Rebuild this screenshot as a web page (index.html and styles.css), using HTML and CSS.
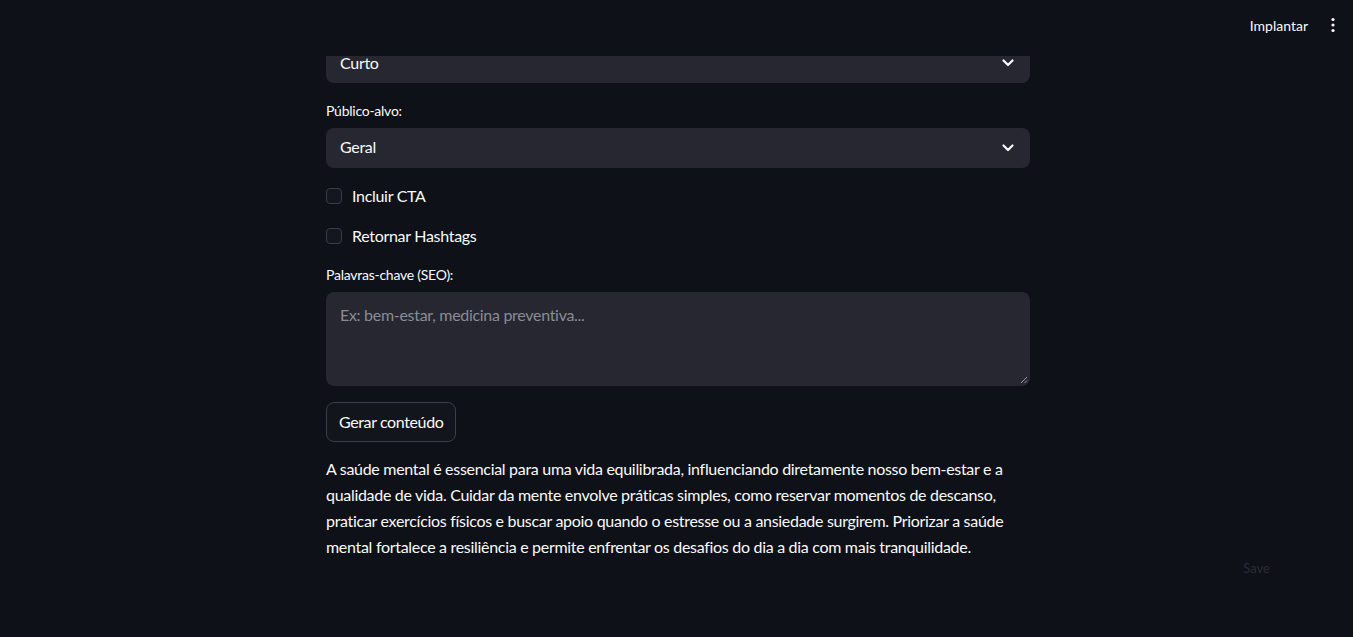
FILE: index.html
```html
<!DOCTYPE html>
<html lang="pt">
<head>
<meta charset="utf-8">
<title>Gerador de conteúdo</title>
<link rel="stylesheet" href="styles.css">
</head>
<body>
<header class="topbar">
  <span class="deploy">Implantar</span>
  <span class="kebab" aria-label="menu">
    <svg width="16" height="16" viewBox="0 0 16 16"><circle cx="8" cy="2.5" r="1.6" fill="#fafafa"/><circle cx="8" cy="8" r="1.6" fill="#fafafa"/><circle cx="8" cy="13.5" r="1.6" fill="#fafafa"/></svg>
  </span>
</header>
<main class="main">
  <div class="block">
    <div class="select">
      <span>Curto</span>
      <svg class="chev" width="12" height="8" viewBox="0 0 12 8"><path d="M1.5 1.5 L6 6 L10.5 1.5" fill="none" stroke="#fafafa" stroke-width="2.2" stroke-linecap="round" stroke-linejoin="round"/></svg>
    </div>
    <label class="label">Público-alvo:</label>
    <div class="select">
      <span>Geral</span>
      <svg class="chev" width="12" height="8" viewBox="0 0 12 8"><path d="M1.5 1.5 L6 6 L10.5 1.5" fill="none" stroke="#fafafa" stroke-width="2.2" stroke-linecap="round" stroke-linejoin="round"/></svg>
    </div>
    <div class="check"><span class="box"></span><span>Incluir CTA</span></div>
    <div class="check"><span class="box"></span><span>Retornar Hashtags</span></div>
    <label class="label seo">Palavras-chave (SEO):</label>
    <div class="textarea">
      <span class="placeholder">Ex: bem-estar, medicina preventiva...</span>
      <svg class="grip" width="8" height="8" viewBox="0 0 8 8"><path d="M7 1 L1 7 M7 4.5 L4.5 7" stroke="#9a9ca4" stroke-width="1"/></svg>
    </div>
    <button class="btn">Gerar conteúdo</button>
    <p class="text">A saúde mental é essencial para uma vida equilibrada, influenciando diretamente nosso bem-estar e a<br>qualidade de vida. Cuidar da mente envolve práticas simples, como reservar momentos de descanso,<br>praticar exercícios físicos e buscar apoio quando o estresse ou a ansiedade surgirem. Priorizar a saúde<br>mental fortalece a resiliência e permite enfrentar os desafios do dia a dia com mais tranquilidade.</p>
  </div>
  <div class="save-row"><span class="save">Save</span></div>
</main>
</body>
</html>
```
FILE: styles.css
```css
html, body {
  margin: 0;
  padding: 0;
  background: #0e1117;
  color: #fafafa;
  font-family: "Lato", "Noto Sans", sans-serif;
  height: 100%;
  overflow: hidden;
}
.topbar {
  position: fixed;
  top: 0;
  left: 0;
  right: 0;
  height: 56px;
  background: #0e1117;
  display: flex;
  align-items: flex-start;
  justify-content: flex-end;
  padding-top: 17px;
  padding-right: 12px;
  box-sizing: border-box;
  gap: 17px;
  z-index: 10;
}
.deploy {
  font-size: 14px;
  line-height: 16px;
  color: #fafafa;
  margin-top: 1px;
}
.kebab {
  display: flex;
  width: 16px;
  height: 16px;
}
.main {
  display: flex;
  flex-direction: column;
  align-items: center;
  padding-top: 43px;
  padding-left: 3px;
  letter-spacing: -0.3px;
}
.block {
  width: 704px;
  display: flex;
  flex-direction: column;
}
.select {
  height: 40px;
  background: #262730;
  border-radius: 8px;
  display: flex;
  align-items: center;
  justify-content: space-between;
  padding: 0 16px 0 14px;
  font-size: 16px;
  line-height: 20px;
}
.select span { margin-top: -2px; }
.select:first-child span { margin-top: 0; }
.chev { display: block; }
.label {
  font-size: 14px;
  line-height: 18px;
  margin-top: 19px;
  margin-bottom: 8px;
  letter-spacing: -0.25px;
}
.check {
  display: flex;
  align-items: center;
  gap: 10px;
  font-size: 16px;
  height: 24px;
  margin-top: 16px;
}
.check span:last-child { margin-top: -2px; }
.box {
  width: 14px;
  height: 14px;
  border: 1px solid #3a3c46;
  border-radius: 4px;
  background: #14171f;
}
.label.seo { margin-top: 18px; }
.textarea {
  position: relative;
  height: 94px;
  background: #262730;
  border-radius: 8px;
  padding: 13px 14px;
  box-sizing: border-box;
  font-size: 16px;
}
.placeholder { color: #8a8c94; }
.grip {
  position: absolute;
  right: 2px;
  bottom: 2px;
}
.btn {
  align-self: flex-start;
  margin-top: 16px;
  height: 40px;
  padding: 0 12px 2px;
  background: #12151c;
  color: #fafafa;
  border: 1px solid #3b3e46;
  border-radius: 8px;
  font-family: inherit;
  font-size: 16px;
  letter-spacing: -0.38px;
}
.text {
  margin: 14px 0 0;
  font-size: 16px;
  line-height: 26px;
}
.save-row {
  width: 100%;
  display: flex;
  justify-content: flex-end;
  padding-right: 83px;
  box-sizing: border-box;
  line-height: 16px;
  letter-spacing: 0;
}
.save {
  font-size: 13px;
  color: #2a2d35;
}
```
